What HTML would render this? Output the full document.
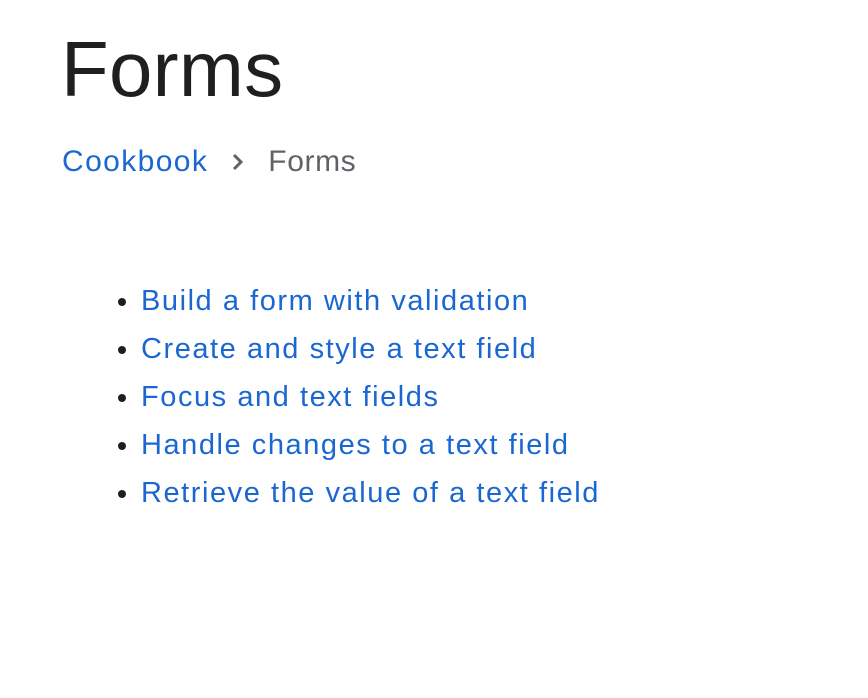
<!DOCTYPE html>
<html><head><style>
body{margin:0;background:#fff;font-family:"Liberation Sans",sans-serif;width:868px;height:698px;overflow:hidden}
h1{position:absolute;left:61px;top:24px;margin:0;font-weight:400;font-size:78px;color:#1f1f1f;letter-spacing:0.3px}
.bc{position:absolute;left:62px;top:145px;font-size:30px;color:#5f6368}
.bc a{color:#1a67d2;text-decoration:none;letter-spacing:1.4px}
.bc span{letter-spacing:0.6px}
.bc svg{vertical-align:-3px;margin:0 22px 0 22px}
ul{position:absolute;left:98px;top:277px;margin:0;padding:0 0 0 43px;font-size:29px;line-height:48px;color:#1f1f1f}
ul li a{color:#1a67d2;text-decoration:none;letter-spacing:1.55px}
</style></head><body>
<h1>Forms</h1>
<div class="bc"><a>Cookbook</a><svg width="16" height="24" viewBox="0 0 16 24"><path d="M4 5l7 7-7 7" stroke="#5f6368" stroke-width="3" fill="none"/></svg><span>Forms</span></div>
<ul>
<li><a>Build a form with validation</a></li>
<li><a>Create and style a text field</a></li>
<li><a>Focus and text fields</a></li>
<li><a>Handle changes to a text field</a></li>
<li><a>Retrieve the value of a text field</a></li>
</ul>
</body></html>
